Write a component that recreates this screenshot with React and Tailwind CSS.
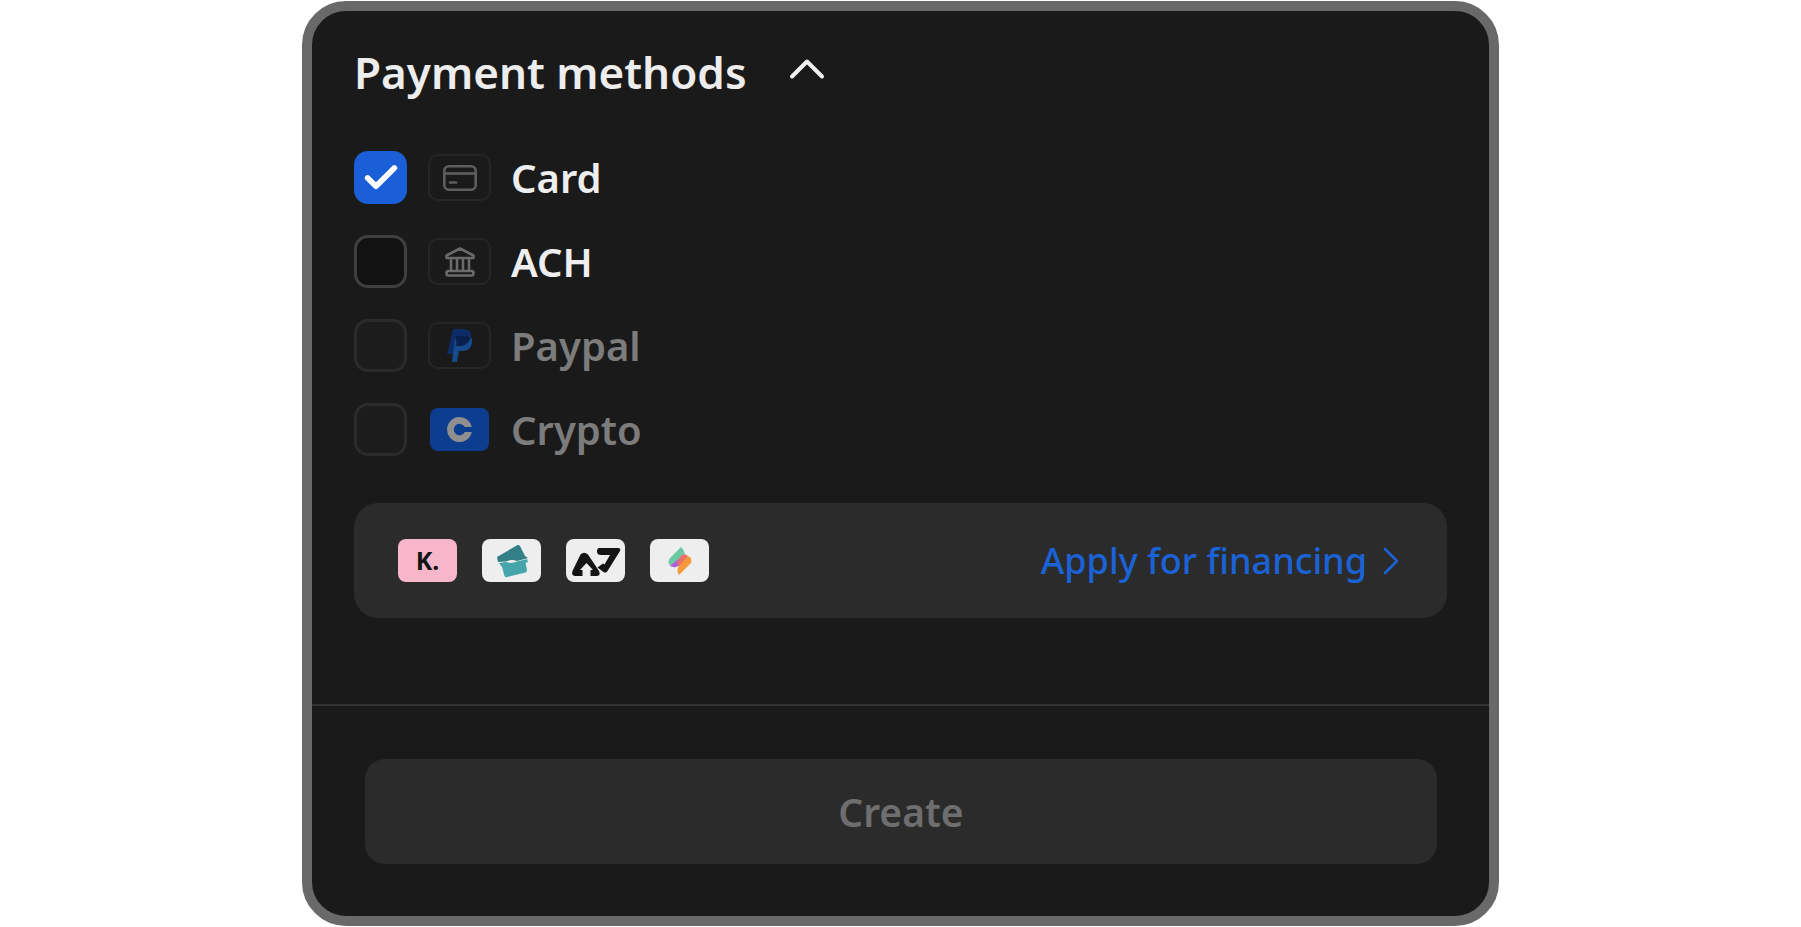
import { ChevronUp, ChevronRight, Check } from "lucide-react";

const CardIcon = () => (
  <svg viewBox="0 0 34 26" className="w-[34px] h-[26px]" fill="none" stroke="#5e5e5e" strokeWidth="2.6">
    <rect x="1.3" y="1.3" width="31.4" height="23.4" rx="4.5" />
    <path d="M1.300 8.500h31.400" />
    <path d="M7 17.500h6" strokeLinecap="round" />
  </svg>
);

const BankIcon = () => (
  <svg viewBox="0 0 32 32" className="w-8 h-8" fill="none" stroke="#6a6a6a" strokeWidth="2.6" strokeLinejoin="round">
    <path d="M16 2.500 2.500 9.500v2.500h27V9.500z" />
    <path d="M7 12v12M13 12v12M19 12v12M25 12v12" />
    <rect x="2.500" y="25" width="27" height="4.500" rx="2" />
  </svg>
);

const PaypalIcon = () => (
  <svg viewBox="0 0 26 34" className="w-[26px] h-[34px]">
    <path d="M6 0h10c6 0 9 3 8 8-1 6-5 9-11 9H9l-2 8H0z" fill="#0d2c66" />
    <path d="M8 7h11c5 0 7 3 6 7-1 6-5 8-10 8h-3l-2 11H5z" fill="#174a8c" />
    <path d="M8 7h10c2 0 4 .5 5.500 1.500C22 14 18 17 13 17H9l.5-3z" fill="#0b1f4d" />
  </svg>
);

const CoinbaseIcon = () => (
  <svg viewBox="0 0 26 26" className="w-[25px] h-[25px]">
    <path d="M13 0a13 13 0 1 0 12.800 15.500h-7.300a6 6 0 1 1 0-5h7.300A13 13 0 0 0 13 0z" fill="#8f8f8f" />
  </svg>
);

const TicketLogo = () => (
  <svg viewBox="0 0 59 43" className="w-full h-full">
    <path d="M15 18 35.500 6q1.500-.5 2.500 1l5 10 3 2-11 3q-6-2-11 .5l-8 .5z" fill="#327f85" />
    <path d="M17 24l7-1q5 2 11-.5L45 20l1 3-2.500 1L45 31q0 2-1.500 2.500L25 38q-2 .5-2.500-1L20 28z" fill="#45a5aa" />
  </svg>
);

const ArrowsLogo = () => (
  <svg viewBox="0 0 59 43" className="w-full h-full">
    <path
      d="M14.500 15.500q3.500-3.500 7.500 0L33 32q2 4.500-2 5h-6.500v-6H27l-6.500-7-6.500 7h2.500v6H9q-4-.5-2.500-5z"
      fill="#141414"
    />
    <path
      d="M33 9h19q3 0 2 3L41.500 32q-1.500 2.500-4 1l-6-4.500 5.500-4 1.500 1L44 16h-9q-4 0-4-3.500Q31 9 33 9z"
      fill="#141414"
    />
  </svg>
);

const SpectrumLogo = () => (
  <svg viewBox="0 0 59 43" className="w-full h-full">
    <path d="M31 8 20 19c-2 2.500-2 5.500 0 7.500l8-5.500 7-4c0-4-2-7-4-9z" fill="#6cc9a4" />
    <path d="M20 26.500c1.500 1.500 4 2 6 1.500l7-3-3-6z" fill="#ad5fd6" />
    <path d="M27 24l3-6c2-2.500 5-3.500 8-1l-8 11z" fill="#ee6f68" />
    <path d="M38 17c3 1 4 4 3 7L29 36c-2-3-2-6-.5-8.500z" fill="#f5993a" />
  </svg>
);

const methods = [
  { label: "Card", tile: <CardIcon />, state: "checked" },
  { label: "ACH", tile: <BankIcon />, state: "open" },
  { label: "Paypal", tile: <PaypalIcon />, state: "disabled" },
  { label: "Crypto", tile: <CoinbaseIcon />, state: "crypto" },
];

function MethodRow({ label, tile, state }) {
  const dim = state === "disabled" || state === "crypto";
  return (
    <div className="flex items-center h-[53px]">
      {state === "checked" && (
        <div className="w-[53px] h-[53px] rounded-[14px] bg-[#1a5fd8] flex items-center justify-center">
          <Check className="w-10 h-10 text-white" strokeWidth={3.4} />
        </div>
      )}
      {state === "open" && <div className="w-[53px] h-[53px] rounded-[14px] border-[3px] border-[#3f3f3f] bg-[#121212]" />}
      {dim && <div className="w-[53px] h-[53px] rounded-[14px] border-[3px] border-[#2b2b2b] bg-[#1c1c1c]" />}
      {state === "crypto" ? (
        <div className="ml-[23px] mr-[2px] w-[59px] h-[43px] rounded-lg bg-[#0c3d8f] flex items-center justify-center">
          {tile}
        </div>
      ) : (
        <div className="ml-[21px] w-[63px] h-[47px] rounded-[10px] border-2 border-[#262626] flex items-center justify-center">
          {tile}
        </div>
      )}
      <span className={`ml-[20px] text-[40px] leading-none font-semibold ${dim ? "text-[#7c7c7c]" : "text-[#eeeeee]"}`}>
        {label}
      </span>
    </div>
  );
}

export default function App() {
  return (
    <div className="bg-white h-[927px] pt-px overflow-hidden" style={{ fontFamily: '"Noto Sans", sans-serif' }}>
      <div className="mx-auto w-[1197px] h-[925px] box-border border-[10px] border-[#696969] rounded-[44px] bg-[#1a1a1a] flex flex-col">
        <div className="px-[42px] pt-[25px]">
          <div className="flex items-center h-[72px]">
            <h2 className="text-[44px] leading-none font-semibold text-[#ededed]">Payment methods</h2>
            <ChevronUp className="ml-[30px] -mt-[6px] w-[60px] h-[60px] text-[#f0f0f0]" strokeWidth={1.6} />
          </div>

          <div className="mt-[43px] flex flex-col gap-[31px]">
            {methods.map((m) => (
              <MethodRow key={m.label} {...m} />
            ))}
          </div>

          <div className="mt-[47px] h-[115px] rounded-3xl bg-[#2b2b2b] pl-[44px] pr-[32px] flex items-center justify-between">
            <div className="flex gap-[25px]">
              <div className="w-[59px] h-[43px] rounded-lg bg-[#f7b6c9] flex items-center justify-center text-[25px] leading-none font-bold text-[#141414]">
                K.
              </div>
              <div className="w-[59px] h-[43px] rounded-lg bg-[#eeeeee]">
                <TicketLogo />
              </div>
              <div className="w-[59px] h-[43px] rounded-lg bg-[#eeeeee]">
                <ArrowsLogo />
              </div>
              <div className="w-[59px] h-[43px] rounded-lg bg-[#eeeeee]">
                <SpectrumLogo />
              </div>
            </div>
            <div className="flex items-center text-[#1a62d6]">
              <span className="text-[36px] leading-none font-medium">Apply for financing</span>
              <ChevronRight className="w-[48px] h-[48px]" strokeWidth={1.3} />
            </div>
          </div>
        </div>

        <div className="mt-[86px] h-[2px] bg-[#333333]" />

        <div className="pl-[53px] pr-[52px] mt-[53px]">
          <div className="h-[105px] rounded-[20px] bg-[#2b2b2b] flex items-center justify-center text-[39px] leading-none font-semibold text-[#6e6e6e]">
            Create
          </div>
        </div>
      </div>
    </div>
  );
}
